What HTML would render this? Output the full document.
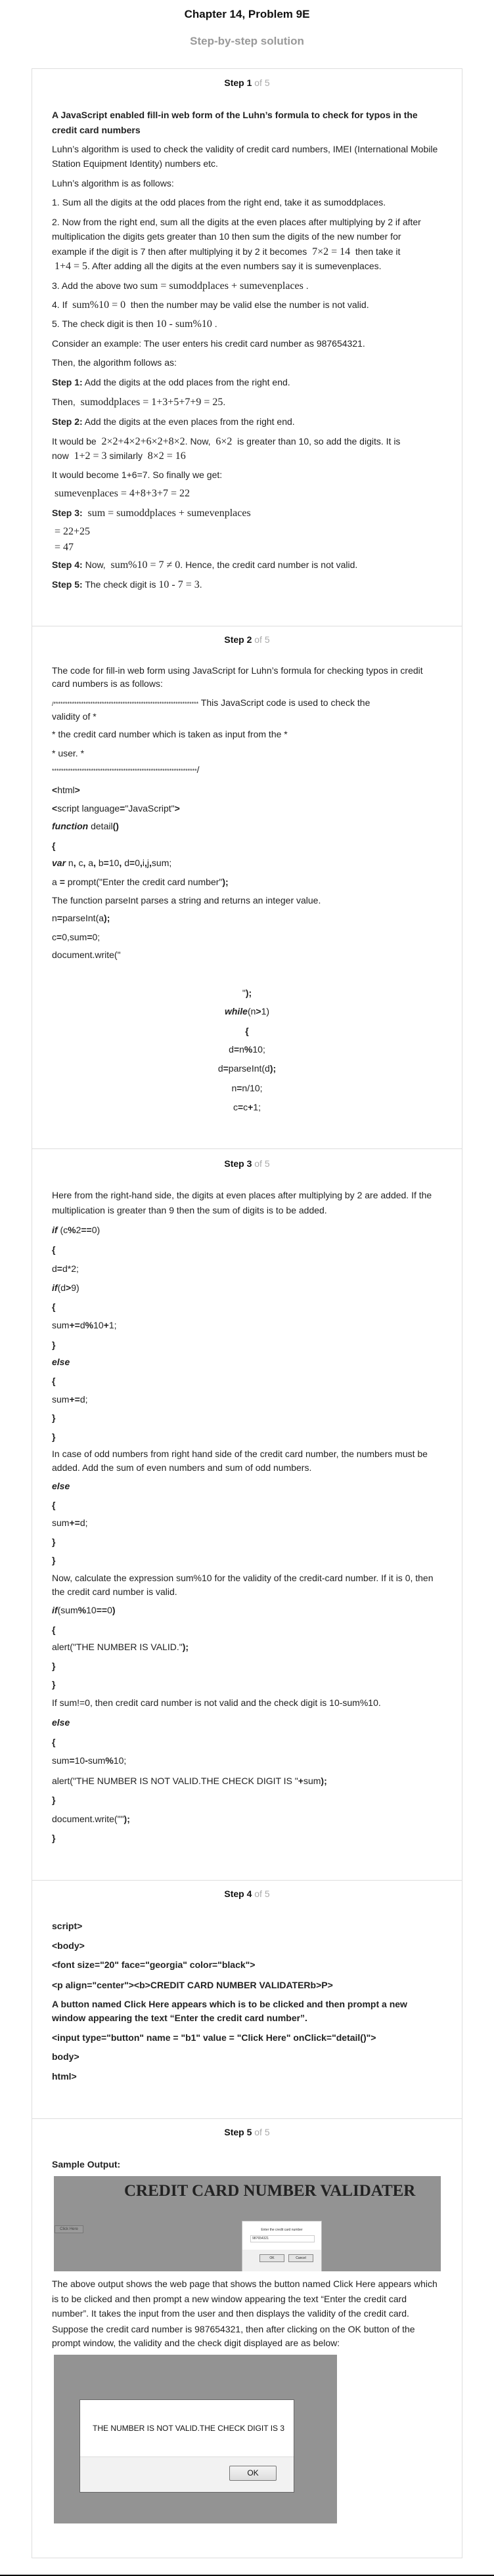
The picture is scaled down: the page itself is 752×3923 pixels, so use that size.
<!DOCTYPE html>
<html><head><meta charset="utf-8"><style>
*{margin:0;padding:0;box-sizing:border-box}
body{width:752px;height:3923px;background:#fff;position:relative;font-family:"Liberation Sans",Arial,sans-serif;color:#222;overflow:hidden}
.l{position:absolute;left:79px;font-size:14px;line-height:16px;white-space:nowrap}
.c{position:absolute;left:0;width:752px;text-align:center;font-size:14px;line-height:16px;white-space:nowrap}
.m{font-family:"Liberation Serif",serif;font-size:16px}
b{font-weight:bold}
.st{font-weight:bold;font-size:14px;color:#111}
.st span{font-weight:normal;color:#aaa}
.sep{position:absolute;left:48px;width:656px;height:1px;background:#ddd}
.bd{font-weight:bold}
</style></head><body>
<div class="c" style="top:12px;font-size:17px;line-height:20px;font-weight:bold;color:#111">Chapter 14, Problem 9E</div>
<div class="c" style="top:53px;font-size:17px;line-height:20px;font-weight:bold;color:#999">Step-by-step solution</div>

<div style="position:absolute;left:48px;top:104px;width:656px;height:3792px;border:1px solid #ddd"></div>

<div class="c st" style="top:118px">Step 1 <span>of 5</span></div>
<div class="l bd" style="top:167px">A JavaScript enabled fill-in web form of the Luhn’s formula to check for typos in the</div>
<div class="l bd" style="top:190px">credit card numbers</div>
<div class="l" style="top:219px">Luhn’s algorithm is used to check the validity of credit card numbers, IMEI (International Mobile</div>
<div class="l" style="top:241px">Station Equipment Identity) numbers etc.</div>
<div class="l" style="top:271px">Luhn’s algorithm is as follows:</div>
<div class="l" style="top:300px">1. Sum all the digits at the odd places from the right end, take it as sumoddplaces.</div>
<div class="l" style="top:330px">2. Now from the right end, sum all the digits at the even places after multiplying by 2 if after</div>
<div class="l" style="top:352px">multiplication the digits gets greater than 10 then sum the digits of the new number for</div>
<div class="l" style="top:375px">example if the digit is 7 then after multiplying it by 2 it becomes &nbsp;<span class="m">7×2 = 14</span>&nbsp; then take it</div>
<div class="l" style="top:397px"><span class="m">&nbsp;1+4 = 5</span>. After adding all the digits at the even numbers say it is sumevenplaces.</div>
<div class="l" style="top:427px">3. Add the above two <span class="m">sum = sumoddplaces + sumevenplaces</span> .</div>
<div class="l" style="top:456px">4. If &nbsp;<span class="m">sum%10 = 0</span>&nbsp; then the number may be valid else the number is not valid.</div>
<div class="l" style="top:485px">5. The check digit is then <span class="m">10 - sum%10</span> .</div>
<div class="l" style="top:515px">Consider an example: The user enters his credit card number as 987654321.</div>
<div class="l" style="top:544px">Then, the algorithm follows as:</div>
<div class="l" style="top:574px"><b>Step 1:</b> Add the digits at the odd places from the right end.</div>
<div class="l" style="top:604px">Then, &nbsp;<span class="m">sumoddplaces = 1+3+5+7+9 = 25</span>.</div>
<div class="l" style="top:634px"><b>Step 2:</b> Add the digits at the even places from the right end.</div>
<div class="l" style="top:664px">It would be &nbsp;<span class="m">2×2+4×2+6×2+8×2</span>. Now, &nbsp;<span class="m">6×2</span>&nbsp; is greater than 10, so add the digits. It is</div>
<div class="l" style="top:686px">now &nbsp;<span class="m">1+2 = 3</span> similarly &nbsp;<span class="m">8×2 = 16</span></div>
<div class="l" style="top:715px">It would become 1+6=7. So finally we get:</div>
<div class="l" style="top:743px"><span class="m">&nbsp;sumevenplaces = 4+8+3+7 = 22</span></div>
<div class="l" style="top:773px"><b>Step 3:</b> &nbsp;<span class="m">sum = sumoddplaces + sumevenplaces</span></div>
<div class="l" style="top:801px"><span class="m">&nbsp;= 22+25</span></div>
<div class="l" style="top:825px"><span class="m">&nbsp;= 47</span></div>
<div class="l" style="top:852px"><b>Step 4:</b> Now, &nbsp;<span class="m">sum%10 = 7 ≠ 0</span>. Hence, the credit card number is not valid.</div>
<div class="l" style="top:882px"><b>Step 5:</b> The check digit is <span class="m">10 - 7 = 3</span>.</div>

<div class="sep" style="top:953px"></div>
<div class="c st" style="top:966px">Step 2 <span>of 5</span></div>
<div class="l" style="top:1013px">The code for fill-in web form using JavaScript for Luhn’s formula for checking typos in credit</div>
<div class="l" style="top:1033px">card numbers is as follows:</div>
<div class="l" style="top:1062px"><span style="font-size:9px">/***************************************************************</span> This JavaScript code is used to check the</div>
<div class="l" style="top:1083px">validity of *</div>
<div class="l" style="top:1110px">* the credit card number which is taken as input from the *</div>
<div class="l" style="top:1139px">* user. *</div>
<div class="l" style="top:1164px"><span style="font-size:9px">***************************************************************</span>/</div>
<div class="l" style="top:1195px"><b>&lt;</b>html<b>&gt;</b></div>
<div class="l" style="top:1223px"><b>&lt;</b>script language<b>=</b>"JavaScript"<b>&gt;</b></div>
<div class="l" style="top:1250px"><b><i>function</i></b> detail<b>()</b></div>
<div class="l" style="top:1280px"><b>{</b></div>
<div class="l" style="top:1306px"><b><i>var</i></b> n<b>,</b> c<b>,</b> a<b>,</b> b<b>=</b>10<b>,</b> d<b>=</b>0<b>,</b>i<b>,</b>j<b>,</b>sum;</div>
<div class="l" style="top:1335px">a <b>=</b> prompt("Enter the credit card number"<b>);</b></div>
<div class="l" style="top:1363px">The function parseInt parses a string and returns an integer value.</div>
<div class="l" style="top:1390px">n<b>=</b>parseInt(a<b>);</b></div>
<div class="l" style="top:1419px">c<b>=</b>0,sum<b>=</b>0;</div>
<div class="l" style="top:1446px">document.write("</div>
<div class="c" style="top:1504px">"<b>);</b></div>
<div class="c" style="top:1532px"><b><i>while</i></b>(n<b>&gt;</b>1)</div>
<div class="c" style="top:1562px"><b>{</b></div>
<div class="c" style="top:1590px">d<b>=</b>n<b>%</b>10;</div>
<div class="c" style="top:1619px">d<b>=</b>parseInt(d<b>);</b></div>
<div class="c" style="top:1649px">n<b>=</b>n/10;</div>
<div class="c" style="top:1678px">c<b>=</b>c<b>+</b>1;</div>

<div class="sep" style="top:1749px"></div>
<div class="c st" style="top:1764px">Step 3 <span>of 5</span></div>
<div class="l" style="top:1812px">Here from the right-hand side, the digits at even places after multiplying by 2 are added. If the</div>
<div class="l" style="top:1835px">multiplication is greater than 9 then the sum of digits is to be added.</div>
<div class="l" style="top:1865px"><b><i>if</i></b> (c<b>%</b>2<b>==</b>0)</div>
<div class="l" style="top:1895px"><b>{</b></div>
<div class="l" style="top:1924px">d<b>=</b>d*2;</div>
<div class="l" style="top:1953px"><b><i>if</i></b>(d<b>&gt;</b>9)</div>
<div class="l" style="top:1982px"><b>{</b></div>
<div class="l" style="top:2010px">sum<b>+=</b>d<b>%</b>10<b>+</b>1;</div>
<div class="l" style="top:2040px"><b>}</b></div>
<div class="l" style="top:2066px"><b><i>else</i></b></div>
<div class="l" style="top:2095px"><b>{</b></div>
<div class="l" style="top:2123px">sum<b>+=</b>d;</div>
<div class="l" style="top:2151px"><b>}</b></div>
<div class="l" style="top:2180px"><b>}</b></div>
<div class="l" style="top:2206px">In case of odd numbers from right hand side of the credit card number, the numbers must be</div>
<div class="l" style="top:2227px">added. Add the sum of even numbers and sum of odd numbers.</div>
<div class="l" style="top:2255px"><b><i>else</i></b></div>
<div class="l" style="top:2284px"><b>{</b></div>
<div class="l" style="top:2311px">sum<b>+=</b>d;</div>
<div class="l" style="top:2340px"><b>}</b></div>
<div class="l" style="top:2368px"><b>}</b></div>
<div class="l" style="top:2395px">Now, calculate the expression sum%10 for the validity of the credit-card number. If it is 0, then</div>
<div class="l" style="top:2416px">the credit card number is valid.</div>
<div class="l" style="top:2444px"><b><i>if</i></b>(sum<b>%</b>10<b>==</b>0<b>)</b></div>
<div class="l" style="top:2474px"><b>{</b></div>
<div class="l" style="top:2500px">alert("THE NUMBER IS VALID."<b>);</b></div>
<div class="l" style="top:2529px"><b>}</b></div>
<div class="l" style="top:2557px"><b>}</b></div>
<div class="l" style="top:2585px">If sum!=0, then credit card number is not valid and the check digit is 10-sum%10.</div>
<div class="l" style="top:2615px"><b><i>else</i></b></div>
<div class="l" style="top:2645px"><b>{</b></div>
<div class="l" style="top:2673px">sum<b>=</b>10<b>-</b>sum<b>%</b>10;</div>
<div class="l" style="top:2704px">alert("THE NUMBER IS NOT VALID.THE CHECK DIGIT IS "<b>+</b>sum<b>);</b></div>
<div class="l" style="top:2733px"><b>}</b></div>
<div class="l" style="top:2762px">document.write(""<b>);</b></div>
<div class="l" style="top:2791px"><b>}</b></div>

<div class="sep" style="top:2863px"></div>
<div class="c st" style="top:2876px">Step 4 <span>of 5</span></div>
<div class="l bd" style="top:2925px">script&gt;</div>
<div class="l bd" style="top:2955px">&lt;body&gt;</div>
<div class="l bd" style="top:2984px">&lt;font size="20" face="georgia" color="black"&gt;</div>
<div class="l bd" style="top:3015px">&lt;p align="center"&gt;&lt;b&gt;CREDIT CARD NUMBER VALIDATERb&gt;P&gt;</div>
<div class="l bd" style="top:3044px">A button named Click Here appears which is to be clicked and then prompt a new</div>
<div class="l bd" style="top:3065px">window appearing the text “Enter the credit card number”.</div>
<div class="l bd" style="top:3095px">&lt;input type="button" name = "b1" value = "Click Here" onClick="detail()"&gt;</div>
<div class="l bd" style="top:3124px">body&gt;</div>
<div class="l bd" style="top:3154px">html&gt;</div>

<div class="sep" style="top:3226px"></div>
<div class="c st" style="top:3239px">Step 5 <span>of 5</span></div>
<div class="l bd" style="top:3288px">Sample Output:</div>

<div style="position:absolute;left:82px;top:3314px;width:589px;height:145px;background:#939393;overflow:hidden">
  <div style="position:absolute;left:107px;top:8px;font-family:'Liberation Serif',serif;font-weight:bold;font-size:25px;line-height:30px;color:#222;white-space:nowrap">CREDIT CARD NUMBER VALIDATER</div>
  <div style="position:absolute;left:1px;top:75px;width:44px;height:12px;border:1px solid #777;background:#9a9a9a;font-size:6px;line-height:10px;text-align:center;color:#444">Click Here</div>
  <div style="position:absolute;left:286px;top:68px;width:122px;height:80px;background:#fff;border:1px solid #bbb">
    <div style="position:absolute;left:0;width:120px;top:10px;text-align:center;font-size:5px;color:#333">Enter the credit card number</div>
    <div style="position:absolute;left:12px;top:21px;width:98px;height:11px;border:1px solid #ccc;font-size:5px;line-height:9px;padding-left:2px;color:#333">987654321</div>
    <div style="position:absolute;left:0;top:43px;width:120px;height:40px;background:#f0f0f0"></div>
    <div style="position:absolute;left:26px;top:50px;width:38px;height:12px;border:1px solid #888;background:#e4e4e4;font-size:5px;line-height:10px;text-align:center">OK</div>
    <div style="position:absolute;left:70px;top:50px;width:38px;height:12px;border:1px solid #888;background:#e4e4e4;font-size:5px;line-height:10px;text-align:center">Cancel</div>
  </div>
</div>

<div class="l" style="top:3470px">The above output shows the web page that shows the button named Click Here appears which</div>
<div class="l" style="top:3493px">is to be clicked and then prompt a new window appearing the text “Enter the credit card</div>
<div class="l" style="top:3515px">number”. It takes the input from the user and then displays the validity of the credit card.</div>
<div class="l" style="top:3539px">Suppose the credit card number is 987654321, then after clicking on the OK button of the</div>
<div class="l" style="top:3560px">prompt window, the validity and the check digit displayed are as below:</div>

<div style="position:absolute;left:82px;top:3586px;width:431px;height:257px;background:#939393">
  <div style="position:absolute;left:39px;top:68px;width:327px;height:142px;background:#fff;border:1px solid #666">
    <div style="position:absolute;left:19px;top:36px;font-size:12px;line-height:14px;white-space:nowrap;color:#111">THE NUMBER IS NOT VALID.THE CHECK DIGIT IS 3</div>
    <div style="position:absolute;left:0;top:86px;width:325px;height:54px;background:#f2f2f2;border-top:1px solid #ddd"></div>
    <div style="position:absolute;left:227px;top:100px;width:72px;height:23px;border:1px solid #777;border-radius:2px;background:linear-gradient(#f4f4f4,#dcdcdc);font-size:12px;line-height:21px;text-align:center;color:#111">OK</div>
  </div>
</div>

<div style="position:absolute;left:0;top:3921px;width:752px;height:2px;background:#000"></div>
</body></html>
